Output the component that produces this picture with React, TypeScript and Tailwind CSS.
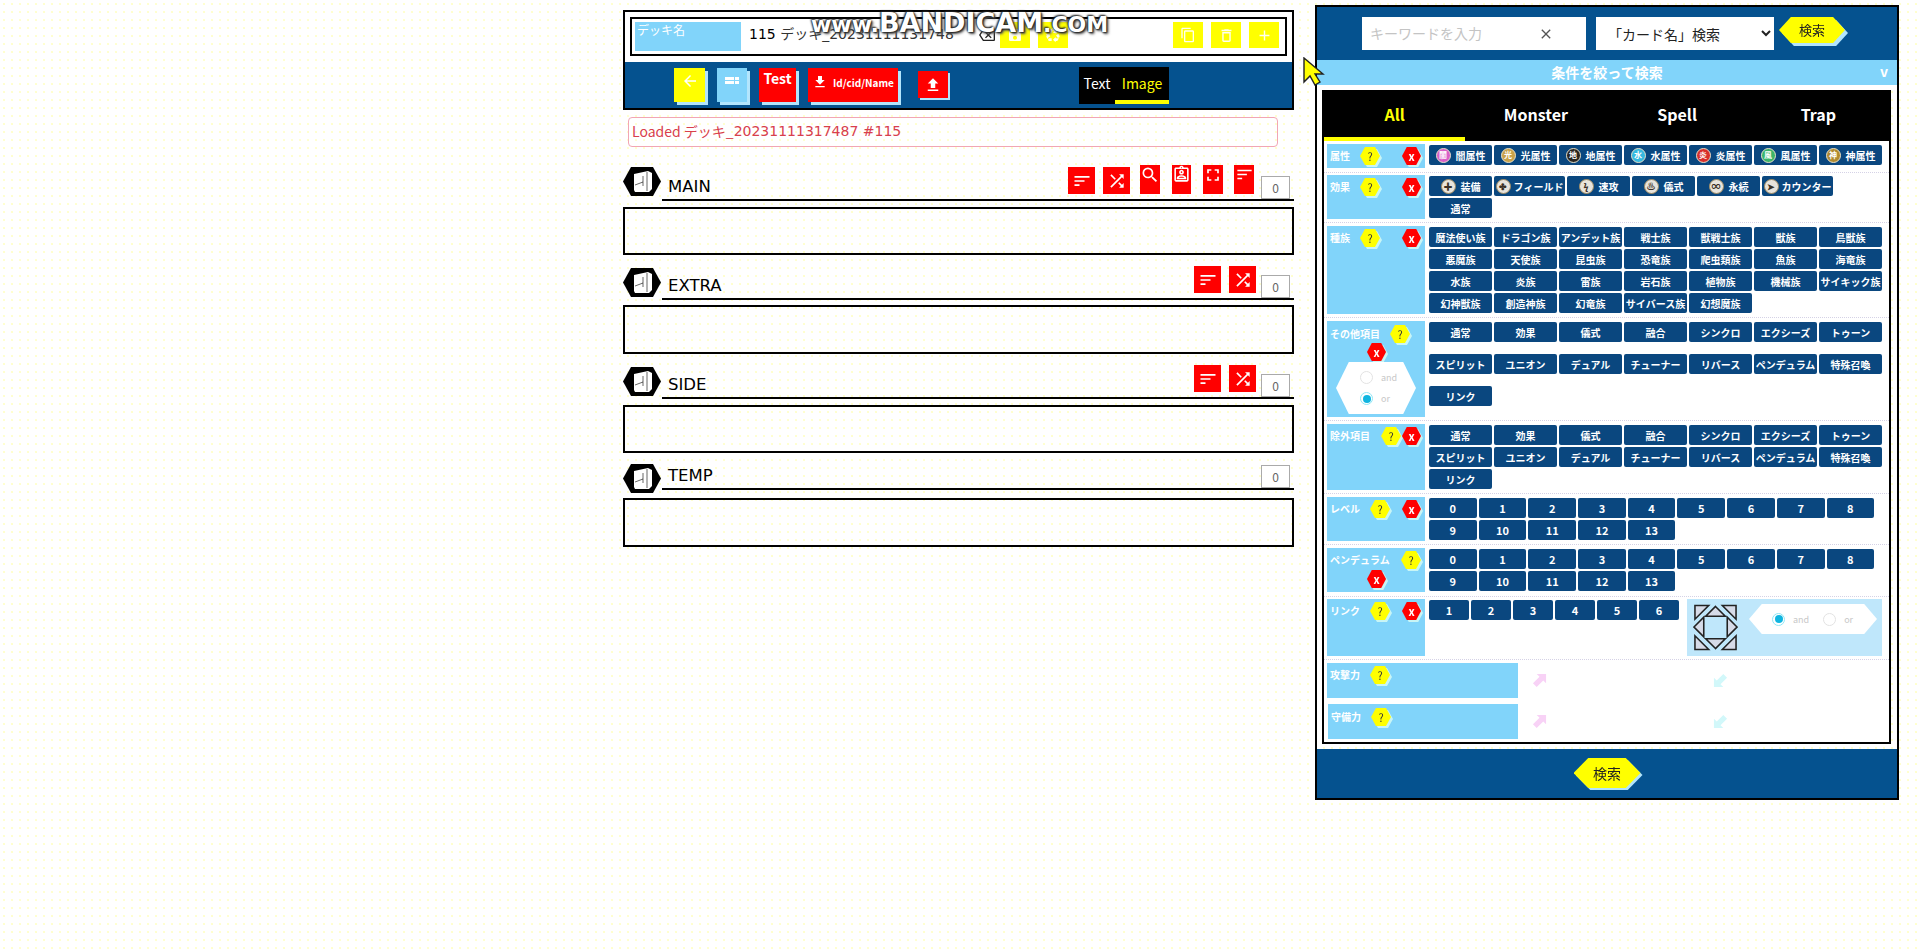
import type { ReactNode } from 'react';
import clsx from 'clsx';
import {
  MdAdd,
  MdArrowBack,
  MdClose,
  MdContentCopy,
  MdDeleteOutline,
  MdFileDownload,
  MdFileUpload,
  MdFullscreen,
  MdOutlineAssignmentInd,
  MdOutlineBackspace,
  MdRecycling,
  MdSave,
  MdSearch,
  MdShuffle,
  MdSort,
} from 'react-icons/md';

const attributes = [
  { kanji: '闇', name: '闇属性', color: 'bg-[#d85fc8]' },
  { kanji: '光', name: '光属性', color: 'bg-[#c9a24a]' },
  { kanji: '地', name: '地属性', color: 'bg-[#2a2620]' },
  { kanji: '水', name: '水属性', color: 'bg-[#35b9e0]' },
  { kanji: '炎', name: '炎属性', color: 'bg-[#d8302c]' },
  { kanji: '風', name: '風属性', color: 'bg-[#3cb56a]' },
  { kanji: '神', name: '神属性', color: 'bg-[#b08a30]' },
];

const spells = [
  { glyph: '✚', name: '装備', wide: false },
  { glyph: '✤', name: 'フィールド', wide: true },
  { glyph: 'ϟ', name: '速攻', wide: false },
  { glyph: '♨', name: '儀式', wide: false },
  { glyph: '∞', name: '永続', wide: false },
  { glyph: '➤', name: 'カウンター', wide: true },
];

const races = [
  '魔法使い族', 'ドラゴン族', 'アンデット族', '戦士族', '獣戦士族', '獣族', '鳥獣族',
  '悪魔族', '天使族', '昆虫族', '恐竜族', '爬虫類族', '魚族', '海竜族',
  '水族', '炎族', '雷族', '岩石族', '植物族', '機械族', 'サイキック族',
  '幻神獣族', '創造神族', '幻竜族', 'サイバース族', '幻想魔族',
];

const monsterTypes = [
  '通常', '効果', '儀式', '融合', 'シンクロ', 'エクシーズ', 'トゥーン',
  'スピリット', 'ユニオン', 'デュアル', 'チューナー', 'リバース', 'ペンデュラム', '特殊召喚',
  'リンク',
];

const levels = ['0', '1', '2', '3', '4', '5', '6', '7', '8', '9', '10', '11', '12', '13'];

const hexClip = '[clip-path:polygon(25%_0,75%_0,100%_50%,75%_100%,25%_100%,0_50%)]';

const Help = ({ className }: { className?: string }) => (
  <div className={clsx('shrink-0 drop-shadow-[2px_2px_0_#c8f5f5]', className)}>
    <div className={clsx('flex h-[18px] w-[20px] items-center justify-center bg-[#ffff00] text-[11px] font-normal text-[#333]', hexClip)}>
      ?
    </div>
  </div>
);

const Clear = ({ className }: { className?: string }) => (
  <div className={clsx('shrink-0 drop-shadow-[2px_2px_0_#c8f5f5]', className)}>
    <div className={clsx('flex h-[18px] w-[19px] items-center justify-center bg-[#ff0000] text-[11px] font-bold text-white', hexClip)}>
      x
    </div>
  </div>
);

const Tag = ({ children, className }: { children: ReactNode; className?: string }) => (
  <span className={clsx('shrink-0 pl-[3px] text-[10px] leading-[17px] font-bold whitespace-nowrap text-white', className)}>
    {children}
  </span>
);

const Chip = ({ children, className }: { children: ReactNode; className?: string }) => (
  <div className={clsx('flex h-[20px] items-center justify-center rounded-[2px] bg-[#0a477f] text-[10px] font-bold whitespace-nowrap text-white', className)}>
    {children}
  </div>
);

const Row = ({ children, className }: { children: ReactNode; className?: string }) => (
  <div className={clsx('flex border-b border-dotted border-[#d5d2e6] pl-[3px]', className)}>{children}</div>
);

const Radio = ({ checked, label }: { checked?: boolean; label: string }) => (
  <div className="flex items-center gap-[8px]">
    <span
      className={clsx(
        'flex h-[13px] w-[13px] items-center justify-center rounded-full border',
        checked ? 'border-[#8fe6f5]' : 'border-[#e2e2e2]'
      )}
    >
      {checked && <span className="h-[8px] w-[8px] rounded-full bg-[#10b5e0]" />}
    </span>
    <span className="text-[9px] leading-none text-[#c8c8c8]">{label}</span>
  </div>
);

const SmallArrow = ({ className }: { className: string }) => (
  <svg viewBox="0 0 16 16" className={clsx('h-[15px] w-[15px] shrink-0', className)}>
    <path d="M5 1h10v10l-3-3-7 7-4-4 7-7z" fill="currentColor" />
  </svg>
);

const DeckIcon = () => (
  <svg viewBox="0 0 38 29" className="h-[29px] w-[38px]">
    <polygon points="8,0 30,0 38,14.5 30,29 8,29 0,14.5" fill="#000" />
    <path d="M11 7l14-3 4 2v16l-3 3H12l-1-2z" fill="#fff" />
    <path d="M24 5v19M12 18l8-3M20 9v10" stroke="#000" strokeWidth="0.6" fill="none" />
  </svg>
);

const RedBtn = ({ icon, className }: { icon: ReactNode; className: string }) => (
  <div className={clsx('flex justify-center bg-[#ff0000] text-white', className)}>{icon}</div>
);

const Count = ({ className }: { className?: string }) => (
  <div className={clsx('ml-[7px] flex h-[23px] w-[29px] shrink-0 items-center justify-center border border-[#aaaaaa] bg-white text-[12px] text-[#666]', className)}>
    0
  </div>
);

type SectionProps = {
  title: string;
  sectionClass: string;
  iconClass: string;
  boxClass: string;
  children?: ReactNode;
};

const Section = ({ title, sectionClass, iconClass, boxClass, children }: SectionProps) => (
  <section className={sectionClass}>
    <div className="flex items-start">
      <div className={clsx('w-[39px] shrink-0', iconClass)}>
        <DeckIcon />
      </div>
      <div className="flex flex-1 items-end justify-between border-b-2 border-black pr-[4px]">
        <span className="ml-[6px] font-['DejaVu_Sans',sans-serif] text-[16.5px] leading-[24px] text-black">{title}</span>
        <div className="flex items-end">
          <div className="mb-[5px] flex items-end">{children}</div>
          <Count />
        </div>
      </div>
    </div>
    <div className={clsx('border-2 border-black', boxClass)} />
  </section>
);

const Panel = () => (
  <div className="ml-[21px] mt-[5px] h-[795px] w-[584px] shrink-0 border-2 border-black">
    <div className="flex h-[53px] items-start bg-[#05528f] pl-[45px] pt-[10px]">
      <div className="flex h-[33px] w-[224px] items-center bg-white pl-[8px]">
        <input
          readOnly
          placeholder="キーワードを入力"
          className="w-[166px] bg-transparent text-[14px] outline-none placeholder:text-[#c4c4c4]"
        />
        <MdClose className="ml-[2px] text-[#555]" size={16} />
      </div>
      <select className="ml-[10px] h-[33px] w-[178px] bg-white pl-[8px] text-[14px] text-[#222] outline-none">
        <option>「カード名」検索</option>
      </select>
      <div className="ml-[5px] drop-shadow-[3px_3px_0_#b3e5fc]">
        <div className="flex h-[26px] w-[66px] items-center justify-center bg-[#ffff00] text-[13px] text-[#222] [clip-path:polygon(18%_0,82%_0,100%_50%,82%_100%,18%_100%,0_50%)]">
          検索
        </div>
      </div>
    </div>

    <div className="relative flex h-[25px] items-center justify-center bg-[#81d4fa] text-[14px] font-bold text-white">
      条件を絞って検索
      <span className="absolute right-[9px] top-[1px] text-[14px]">v</span>
    </div>

    <div className="ml-[5px] mt-[5px] w-[569px] border-2 border-black bg-white">
      <div className="grid h-[49px] grid-cols-4 bg-black text-[16px] font-bold text-white">
        <div className="flex items-center justify-center border-b-4 border-[#ffff00] pb-[2px] text-[#ffff00]">All</div>
        <div className="flex items-center justify-center pb-[6px]">Monster</div>
        <div className="flex items-center justify-center pb-[6px]">Spell</div>
        <div className="flex items-center justify-center pb-[6px]">Trap</div>
      </div>

      <Row className="pt-[3px] pb-[4px]">
        <div className="flex h-[24px] w-[98px] shrink-0 items-start bg-[#81d4fa] pt-[3px]">
          <Tag className="w-[33px]">属性</Tag>
          <Help />
          <Clear className="ml-[22px]" />
        </div>
        <div className="ml-[4px] flex w-[456px] flex-wrap content-start gap-[2px] pt-px">
          {attributes.map((a) => (
            <Chip key={a.name} className="w-[63px] gap-[5px]">
              <span className={clsx('flex h-[15px] w-[15px] items-center justify-center rounded-full border border-[#e8e0c8] text-[8px] leading-none text-white', a.color)}>
                {a.kanji}
              </span>
              {a.name}
            </Chip>
          ))}
        </div>
      </Row>

      <Row className="pt-[2px] pb-[3px]">
        <div className="flex h-[44px] w-[98px] shrink-0 items-start bg-[#81d4fa] pt-[3px]">
          <Tag className="w-[33px]">効果</Tag>
          <Help />
          <Clear className="ml-[22px]" />
        </div>
        <div className="ml-[4px] flex w-[456px] flex-wrap content-start gap-[2px] pt-px">
          {spells.map((s) => (
            <Chip key={s.name} className={clsx(s.wide ? 'w-[71px] gap-[3px]' : 'w-[63px] gap-[5px]')}>
              <span className="flex h-[15px] w-[15px] items-center justify-center rounded-full border border-[#a08a60] bg-[#e8e4dc] text-[9px] leading-none text-[#3a3025]">
                {s.glyph}
              </span>
              {s.name}
            </Chip>
          ))}
          <Chip className="w-[63px]">通常</Chip>
        </div>
      </Row>

      <Row className="pt-[3px] pb-[3px]">
        <div className="flex h-[88px] w-[98px] shrink-0 items-start bg-[#81d4fa] pt-[3px]">
          <Tag className="w-[33px]">種族</Tag>
          <Help />
          <Clear className="ml-[22px]" />
        </div>
        <div className="ml-[4px] flex w-[456px] flex-wrap content-start gap-[2px] pt-px">
          {races.map((r) => (
            <Chip key={r} className="w-[63px]">{r}</Chip>
          ))}
        </div>
      </Row>

      <Row className="pt-[3px] pb-[3px]">
        <div className="h-[96px] w-[98px] shrink-0 bg-[#81d4fa] pt-[4px]">
          <div className="flex items-start">
            <Tag className="w-[63px]">その他項目</Tag>
            <Help />
          </div>
          <Clear className="ml-[40px] w-[19px]" />
          <div className={clsx('ml-[9px] mt-[1px] flex h-[52px] w-[80px] flex-col justify-center gap-[8px] bg-white pl-[24px]', '[clip-path:polygon(16%_0,84%_0,100%_50%,84%_100%,16%_100%,0_50%)]')}>
            <Radio label="and" />
            <Radio checked label="or" />
          </div>
        </div>
        <div className="ml-[4px] flex w-[456px] flex-wrap content-start gap-x-[2px] gap-y-[12px] pt-px">
          {monsterTypes.map((t) => (
            <Chip key={t} className="w-[63px]">{t}</Chip>
          ))}
        </div>
      </Row>

      <Row className="pt-[3px] pb-[3px]">
        <div className="flex h-[66px] w-[98px] shrink-0 items-start bg-[#81d4fa] pt-[3px]">
          <Tag className="w-[54px]">除外項目</Tag>
          <Help />
          <Clear className="ml-px" />
        </div>
        <div className="ml-[4px] flex w-[456px] flex-wrap content-start gap-[2px] pt-px">
          {monsterTypes.map((t) => (
            <Chip key={t} className="w-[63px]">{t}</Chip>
          ))}
        </div>
      </Row>

      <Row className="pt-[3px] pb-[3px]">
        <div className="flex h-[44px] w-[98px] shrink-0 items-start bg-[#81d4fa] pt-[3px]">
          <Tag className="w-[43px]">レベル</Tag>
          <Help />
          <Clear className="ml-[12px]" />
        </div>
        <div className="ml-[4px] flex w-[456px] flex-wrap content-start gap-[2px] pt-px">
          {levels.map((l) => (
            <Chip key={l} className="w-[47.7px] text-[11px]">{l}</Chip>
          ))}
        </div>
      </Row>

      <Row className="pt-[3px] pb-[4px]">
        <div className="h-[44px] w-[98px] shrink-0 bg-[#81d4fa] pt-[3px]">
          <div className="flex items-start">
            <Tag className="w-[74px]">ペンデュラム</Tag>
            <Help />
          </div>
          <Clear className="ml-[40px] mt-px w-[19px]" />
        </div>
        <div className="ml-[4px] flex w-[456px] flex-wrap content-start gap-[2px] pt-px">
          {levels.map((l) => (
            <Chip key={l} className="w-[47.7px] text-[11px]">{l}</Chip>
          ))}
        </div>
      </Row>

      <Row className="pt-[2px] pb-[3px]">
        <div className="flex h-[57px] w-[98px] shrink-0 items-start bg-[#81d4fa] pt-[3px]">
          <Tag className="w-[43px]">リンク</Tag>
          <Help />
          <Clear className="ml-[12px]" />
        </div>
        <div className="ml-[4px] flex w-[250px] flex-wrap content-start gap-[2px] pt-px">
          {['1', '2', '3', '4', '5', '6'].map((l) => (
            <Chip key={l} className="w-[40px] text-[11px]">{l}</Chip>
          ))}
        </div>
        <div className="ml-[8px] flex h-[57px] w-[195px] items-start bg-[#bfe7fb] pt-[5px] pl-[6px]">
          <svg viewBox="0 0 46 47" className="h-[47px] w-[45px] shrink-0" fill="#d6dbe8" stroke="#222" strokeWidth="1.6">
            <polygon points="2,1 16,1 2,15" />
            <polygon points="30,1 44,1 44,15" />
            <polygon points="2,32 2,46 16,46" />
            <polygon points="44,32 44,46 30,46" />
            <polygon points="23,2 33,12 13,12" />
            <polygon points="23,45 13,35 33,35" />
            <polygon points="1,23 11,13 11,33" />
            <polygon points="45,23 35,13 35,33" />
          </svg>
          <div className="ml-[11px] flex h-[30px] w-[128px] items-center gap-[14px] bg-white pl-[23px] [clip-path:polygon(10%_0,90%_0,100%_50%,90%_100%,10%_100%,0_50%)]">
            <Radio checked label="and" />
            <Radio label="or" />
          </div>
        </div>
      </Row>

      <div className="pt-[3px] pb-[3px] pl-[3px]">
        <div className="flex">
          <div className="flex h-[35px] w-[191px] shrink-0 items-start bg-[#81d4fa] pt-[3px]">
            <Tag className="w-[43px]">攻撃力</Tag>
            <Help />
          </div>
          <SmallArrow className="ml-[14px] self-center text-[#f8d2f6]" />
          <SmallArrow className="ml-[166px] rotate-180 self-center text-[#d2f8fa]" />
        </div>
        <div className="mt-[6px] flex">
          <div className="ml-px flex h-[35px] w-[190px] shrink-0 items-start bg-[#81d4fa] pt-[4px]">
            <Tag className="w-[43px]">守備力</Tag>
            <Help />
          </div>
          <SmallArrow className="ml-[14px] self-center text-[#f8d2f6]" />
          <SmallArrow className="ml-[166px] rotate-180 self-center text-[#d2f8fa]" />
        </div>
      </div>
    </div>

    <div className="mt-[5px] flex h-[49px] justify-center bg-[#05528f] pt-[9px]">
      <div className="drop-shadow-[2px_2px_0_#b3e5fc]">
        <div className="flex h-[30px] w-[67px] items-center justify-center bg-[#ffff00] text-[14px] text-[#222] [clip-path:polygon(22%_0,78%_0,100%_50%,78%_100%,22%_100%,0_50%)]">
          検索
        </div>
      </div>
    </div>
  </div>
);

const YellowBtn = ({ icon, className }: { icon: ReactNode; className?: string }) => (
  <div className={clsx('flex h-[26px] w-[30px] shrink-0 items-center justify-center bg-[#ffff00] text-[#fffff0]', className)}>{icon}</div>
);

const DeckEditor = () => (
  <div className="mt-[10px] w-[671px] shrink-0">
    <div className="h-[100px] border-2 border-black">
      <div className="h-[50px] bg-white px-[5px] pt-[5px]">
        <div className="flex h-[39px] items-start border-2 border-black pl-[3px] pt-[3px]">
          <div className="h-[29px] w-[106px] shrink-0 bg-[#81d4fa] px-[2px] text-[12px] leading-[15px] text-white">デッキ名</div>
          <div className="ml-[8px] w-[230px] shrink-0 font-['DejaVu_Sans','Noto_Sans_CJK_JP',sans-serif] text-[14px] leading-[24px] whitespace-nowrap text-[#333]">
            <span className="text-black">115</span> デッキ_20231111131748
          </div>
          <MdOutlineBackspace className="mt-[5px] shrink-0 text-[#222]" size={16} />
          <YellowBtn className="ml-[5px]" icon={<MdSave size={16} />} />
          <YellowBtn className="ml-[8px]" icon={<MdRecycling size={16} />} />
          <YellowBtn className="ml-[105px]" icon={<MdContentCopy size={16} />} />
          <YellowBtn className="ml-[8px]" icon={<MdDeleteOutline size={17} />} />
          <YellowBtn className="ml-[8px]" icon={<MdAdd size={17} />} />
        </div>
      </div>
      <div className="flex h-[46px] items-start bg-[#05528f] pl-[49px] pt-[6px]">
        <div className="flex h-[34px] w-[31px] shrink-0 justify-center bg-[#ffff00] pt-[4px] text-white shadow-[3px_3px_0_#b3e5fc]">
          <MdArrowBack size={18} />
        </div>
        <div className="ml-[12px] flex h-[34px] w-[30px] shrink-0 justify-center bg-[#81d4fa] pt-[9px] shadow-[3px_3px_0_#b3e5fc]">
          <svg viewBox="0 0 14 8" className="h-[8px] w-[14px]" fill="#fff">
            <rect x="0" y="0" width="9" height="3" />
            <rect x="10" y="0" width="4" height="3" />
            <rect x="0" y="4" width="9" height="3" />
            <rect x="10" y="4" width="4" height="3" />
          </svg>
        </div>
        <div className="ml-[12px] h-[34px] w-[37px] shrink-0 bg-[#ff0000] text-center text-[14px] leading-[20px] font-bold text-white shadow-[3px_3px_0_#b3e5fc]">
          Test
        </div>
        <div className="ml-[12px] flex h-[34px] w-[90px] shrink-0 items-start justify-center gap-[5px] bg-[#ff0000] pt-[6px] text-[10px] leading-[18px] font-bold whitespace-nowrap text-white shadow-[3px_3px_0_#b3e5fc]">
          <MdFileDownload size={16} />
          Id/cid/Name
        </div>
        <div className="ml-[20px] mt-[3px] flex h-[27px] w-[30px] shrink-0 items-center justify-center bg-[#ff0000] text-white shadow-[2px_2px_0_#b3e5fc]">
          <MdFileUpload size={18} />
        </div>
        <div className="-mt-px ml-[131px] grid h-[37px] w-[90px] shrink-0 grid-cols-[36px_54px] bg-black text-[14px]">
          <div className="flex items-center justify-center pb-[4px] text-white">Text</div>
          <div className="flex items-center justify-center border-b-4 border-[#ffff00] text-[#ffff00]">Image</div>
        </div>
      </div>
    </div>

    <div className="ml-[5px] mt-[7px] flex h-[30px] w-[650px] items-center rounded-[4px] border border-[#f2a6b4] pb-[2px] pl-[3px] text-[14px] whitespace-pre text-[#d8404c]">
      Loaded デッキ_<span className="font-['DejaVu_Sans',sans-serif]">20231111317487 #115</span>
    </div>

    <Section title="MAIN" sectionClass="mt-[18px]" iconClass="mt-[2px]" boxClass="mt-[6px] h-[48px]">
      <RedBtn className="h-[27px] w-[27px] items-center" icon={<MdSort size={20} />} />
      <RedBtn className="ml-[8px] h-[27px] w-[27px] items-center" icon={<MdShuffle size={20} />} />
      <RedBtn className="ml-[10px] h-[29px] w-[20px]" icon={<MdSearch size={20} />} />
      <RedBtn className="ml-[12px] h-[29px] w-[19px]" icon={<MdOutlineAssignmentInd size={19} />} />
      <RedBtn className="ml-[12px] h-[29px] w-[20px]" icon={<MdFullscreen size={20} />} />
      <RedBtn className="ml-[11px] h-[29px] w-[20px]" icon={<MdSort size={19} />} />
    </Section>

    <Section title="EXTRA" sectionClass="mt-[11px]" iconClass="mt-[2px]" boxClass="mt-[5px] h-[49px]">
      <RedBtn className="h-[27px] w-[27px] items-center" icon={<MdSort size={20} />} />
      <RedBtn className="-mr-[2px] ml-[8px] h-[27px] w-[27px] items-center" icon={<MdShuffle size={20} />} />
    </Section>

    <Section title="SIDE" sectionClass="mt-[11px]" iconClass="mt-[2px]" boxClass="mt-[6px] h-[48px]">
      <RedBtn className="h-[27px] w-[27px] items-center" icon={<MdSort size={20} />} />
      <RedBtn className="-mr-[2px] ml-[8px] h-[27px] w-[27px] items-center" icon={<MdShuffle size={20} />} />
    </Section>

    <Section title="TEMP" sectionClass="mt-[11px]" iconClass="-mb-[5px]" boxClass="mt-[8px] h-[49px]" />
  </div>
);

const Cursor = () => (
  <svg viewBox="0 0 22 30" className="absolute left-[1303px] top-[57px] h-[30px] w-[22px]">
    <path d="M1 1v24l6-6 5 9 5-3-5-8h8z" fill="#ffff00" stroke="#222" strokeWidth="1.4" />
  </svg>
);

const Watermark = () => (
  <div className="absolute left-[811px] top-[3px] font-['DejaVu_Sans',sans-serif] font-bold whitespace-nowrap text-white [text-shadow:0_0_2px_#222,1px_1px_2px_#222,-1px_-1px_2px_#222,2px_2px_3px_#666]">
    <span className="text-[22px]">www.</span>
    <span className="text-[27px]">BANDICAM</span>
    <span className="text-[22px]">.COM</span>
  </div>
);

export default function App() {
  return (
    <div className="relative flex min-h-[952px] items-start bg-[#ffffff] bg-[radial-gradient(#ffffcc_0.7px,transparent_0.8px)] bg-size-[8px_8px] pl-[623px] font-['Noto_Sans_CJK_JP','Noto_Sans',sans-serif]">
      <DeckEditor />
      <Panel />
      <Watermark />
      <Cursor />
    </div>
  );
}
